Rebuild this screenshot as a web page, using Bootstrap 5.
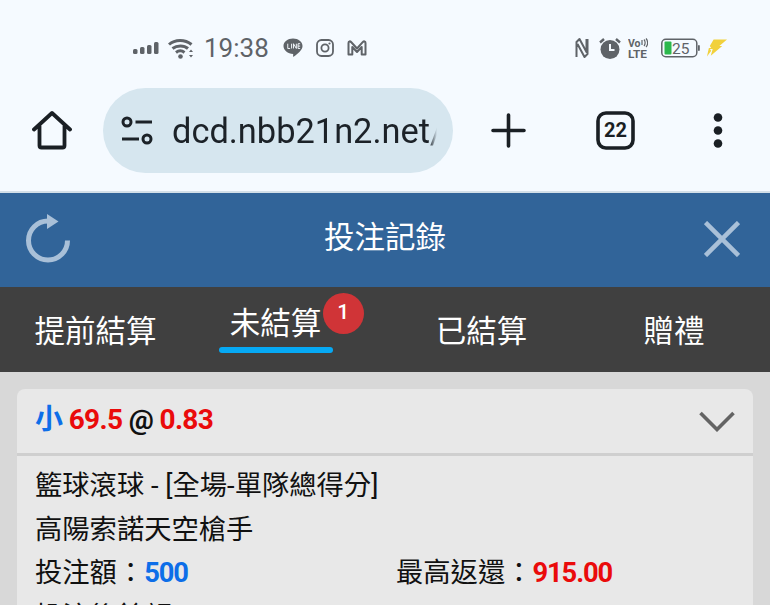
<!DOCTYPE html>
<html lang="zh-Hant">
<head>
<meta charset="utf-8">
<link href="https://cdn.jsdelivr.net/npm/bootstrap@5.3.0/dist/css/bootstrap.min.css" rel="stylesheet">
<style>
html,body{margin:0;height:605px;overflow:hidden}
body{background:#f5faff;font-family:Roboto,"Noto Sans CJK TC",sans-serif;color:#111}
.statusbar{height:87px;padding:9px 43px 0 133px;color:#5f6368}
.sb-wifi{margin-left:9px}
.sb-time{font-size:26px;line-height:34px;width:66px;margin-left:9px;flex:none}
.sb-line{margin-left:13px}
.sb-ig{margin-left:13px}
.sb-m{margin-left:13px}
.sb-alarm{margin-left:10px}
.sb-volte{margin-left:7px}
.sb-batt{margin-left:13px}
.sb-bolt{margin-left:6px}
.chrome{height:104px;padding-bottom:18px}
.chrome-home{width:103px}
.urlpill{width:350px;height:85px;background:#d6e6ef;border-radius:43px;padding-left:18px;overflow:hidden;margin-top:1px}
.urltext{font-size:34.4px;line-height:40px;margin-left:18px;color:#1c2228;width:265px;overflow:hidden;white-space:nowrap;-webkit-mask-image:linear-gradient(90deg,#000 97%,transparent)}
.chrome-rest{flex:1}
.ico-plus{margin-left:38px}
.ico-tabs{margin-left:70px}
.ico-dots{margin-left:78px}
.sep{height:2px;background:#d3dfe8}
.titlebar{height:94px;background:#316499;color:#fff;padding:0 30px 2px}
.side-slot{flex:1 1 0}
.ico-refresh{margin-left:-4px}
.title-txt{font-size:30.5px;line-height:40px;font-weight:400;margin-top:-2px}
.tabs{height:85px;background:#404040;color:#fff;font-size:30.5px}
.tab-a{position:relative;line-height:40px;text-align:center;padding-top:4px}
.tab1{width:191px}.tab2{width:194px}.tab3{width:193px}.tab4{width:192px}
.tab-inner{position:relative;display:inline-block;top:-8px;margin-right:25px}
.under{position:absolute;left:-11px;right:-12px;top:43px;height:6px;background:#06a9f4;border-radius:3px}
.dotbadge{position:absolute;left:93px;top:-11px;width:41px;height:41px;border-radius:50%;background:#d03437;font-size:21px;font-weight:500;line-height:38px;text-align:center;color:#fff;font-family:Roboto,sans-serif;padding:0}
.pagebody{background:#d8d8d8;height:233px;padding:17px 17px 0}
.bet-card{background:#e8e8e8;border:0;border-radius:8px 8px 0 0;height:216px;overflow:hidden;color:#111}
.bet-head{height:67px;flex:none;border-bottom:3px solid #cfcfcf;padding:0 18px;background:transparent}
.bet-title{font-size:28px;line-height:36px;font-weight:700;letter-spacing:-.65px;margin-top:-3px}
.c-blue{color:#0d6ee8}.c-red{color:#ea0b0b}
.bet-body{padding:9px 18px 0;font-size:27.3px;line-height:43.6px;white-space:nowrap}
.bet-body b{font-weight:700;letter-spacing:-1.1px}
.half{width:361px}
.tiny-ico{display:block;flex:none}
</style>
</head>
<body>
<div class="statusbar d-flex align-items-center">
  <svg class="tiny-ico" width="26" height="12" viewBox="0 0 26 12"><rect x="0" y="7" width="4.500" height="5" rx="1.500" fill="#5f6368"/><rect x="7" y="5" width="4.500" height="7" rx="1.500" fill="#5f6368"/><rect x="14" y="3" width="4.500" height="9" rx="1.500" fill="#5f6368"/><rect x="21" y="0" width="4.500" height="12" rx="1.500" fill="#5f6368"/></svg>
  <svg class="tiny-ico sb-wifi" width="27" height="21" viewBox="0 0 27 21"><path d="M1 6.500C7 1 17 1 23.500 6.500M4.500 10.500C9 7 16 7 20 10.500M8 14.500C10.500 12.500 14 12.500 16.500 14.500" fill="none" stroke="#5f6368" stroke-width="3"/><circle cx="12.500" cy="18.500" r="2.300" fill="#5f6368"/><path d="M23 11.500l2 2.500h-4zM23 19.500l2-2.500h-4z" fill="#5f6368"/></svg>
  <div class="sb-time">19:38</div>
  <svg class="tiny-ico sb-line" width="20" height="20" viewBox="0 0 21 20"><path d="M10.500 0C16 0 20.500 3.500 20.500 8c0 4-5 8.500-9 11-.8.500-1-.1-.9-.8l.1-2C5 16.200.5 12.500.5 8 .5 3.500 5 0 10.500 0z" fill="#5f6368"/><path d="M5 5.500v5h2.500M9 5.500v5M11 10.500v-5l3 5v-5M18 5.500h-2.200v5H18M15.800 8H18" fill="none" stroke="#f5faff" stroke-width="1"/></svg>
  <svg class="tiny-ico sb-ig" width="18" height="18" viewBox="0 0 18 18"><rect x="1" y="1" width="16" height="16" rx="4.500" fill="none" stroke="#5f6368" stroke-width="1.800"/><circle cx="9" cy="9" r="3.600" fill="none" stroke="#5f6368" stroke-width="1.800"/><circle cx="13.500" cy="4.500" r="1.100" fill="#5f6368"/></svg>
  <svg class="tiny-ico sb-m" width="20" height="16" viewBox="0 0 20 16"><path d="M1.500 14.500V3c0-2 1.700-2 2.800-.8L10 8.500l5.700-6.300c1.100-1.200 2.800-1.200 2.800.8v11.500h-3.800V7L10 12 5.300 7v7.500z" fill="none" stroke="#5f6368" stroke-width="2" stroke-linejoin="round"/></svg>
  <div class="flex-grow-1"></div>
  <svg class="tiny-ico" width="14" height="22" viewBox="0 0 14 22"><path d="M1.500 20V5l3-3 7 13V2M12.500 2v15l-3 3-7-13" fill="none" stroke="#5f6368" stroke-width="2" stroke-linejoin="round"/></svg>
  <svg class="tiny-ico sb-alarm" width="22" height="21" viewBox="0 0 22 21"><circle cx="11" cy="11.500" r="9.500" fill="#5f6368"/><path d="M11 6v6h4.500" fill="none" stroke="#f5faff" stroke-width="2"/><path d="M1 4.500L5 1M21 4.500L17 1" stroke="#5f6368" stroke-width="2.400" fill="none"/></svg>
  <svg class="tiny-ico sb-volte" width="20" height="21" viewBox="0 0 20 21"><text x="0" y="9" font-size="10.500" font-weight="700" font-family="Roboto,sans-serif" fill="#5f6368">Vo</text><path d="M14 7V2M16 1.500c1.500 1.800 1.500 5 0 6.500M18 .5c2.200 2.500 2.200 6.500 0 8.500" stroke="#5f6368" fill="none" stroke-width="1.200"/><text x="0" y="20" font-size="11" font-weight="700" font-family="Roboto,sans-serif" fill="#5f6368" textLength="19" lengthAdjust="spacingAndGlyphs">LTE</text></svg>
  <svg class="tiny-ico sb-batt" width="39" height="20" viewBox="0 0 39 20"><rect x=".8" y="1.300" width="35" height="17.400" rx="4" fill="none" stroke="#5f6368" stroke-width="1.500"/><rect x="3.500" y="3.500" width="7" height="13" rx="1" fill="#2cb84c"/><rect x="37" y="7" width="1.800" height="6" rx=".9" fill="#5f6368"/><text x="11" y="15.500" font-size="15.500" font-family="Roboto,sans-serif" fill="#5f6368">25</text></svg>
  <svg class="tiny-ico sb-bolt" width="21" height="18" viewBox="0 0 22 18"><path d="M8 0h14L14 7h3L5 17l2-7H4l1.500 2L1 18l2-9h2.500L4 7z" fill="#f1d13d"/></svg>
</div>
<div class="chrome d-flex align-items-center">
  <div class="chrome-home d-flex justify-content-center">
    <svg width="40" height="39" viewBox="0 0 40 39"><path d="M2 18.500L20 2l18 16.500M7.500 15v19.500q0 2 2 2h21q2 0 2-2V15" fill="none" stroke="#1a1f24" stroke-width="3.800" stroke-linejoin="round" stroke-linecap="round"/></svg>
  </div>
  <div class="urlpill d-flex align-items-center">
    <svg class="tiny-ico" width="33" height="29" viewBox="0 0 33 29"><circle cx="6" cy="6" r="4" fill="none" stroke="#1c2228" stroke-width="3"/><path d="M14.500 6H31M1 23h17" stroke="#1c2228" stroke-width="3.200" fill="none"/><circle cx="26" cy="23" r="4" fill="none" stroke="#1c2228" stroke-width="3"/></svg>
    <div class="urltext">dcd.nbb21n2.net/</div>
  </div>
  <div class="chrome-rest d-flex align-items-center">
    <svg class="ico-plus" width="35" height="35" viewBox="0 0 35 35"><path d="M17.500 2v31M2 17.500h31" stroke="#1a1f24" stroke-width="3.600" stroke-linecap="round"/></svg>
    <svg class="ico-tabs" width="39" height="39" viewBox="0 0 39 39"><rect x="2" y="2" width="35" height="35" rx="8" fill="none" stroke="#1a1f24" stroke-width="3.600"/><text x="19.500" y="26" text-anchor="middle" font-size="20" font-weight="700" font-family="Roboto,sans-serif" fill="#1a1f24">22</text></svg>
    <svg class="ico-dots" width="10" height="35" viewBox="0 0 10 35"><circle cx="5" cy="4.500" r="4.300" fill="#1a1f24"/><circle cx="5" cy="17.500" r="4.300" fill="#1a1f24"/><circle cx="5" cy="30.500" r="4.300" fill="#1a1f24"/></svg>
  </div>
</div>
<div class="sep"></div>
<div class="titlebar d-flex align-items-center">
  <div class="side-slot"><svg class="tiny-ico ico-refresh" width="46" height="50" viewBox="0 0 46 50"><path d="M22 7A19.500 19.500 0 1 0 41.500 26.500" fill="none" stroke="#a9c0d8" stroke-width="5"/><path d="M21 0l11.500 7.500L21 15z" fill="#a9c0d8"/></svg></div>
  <div class="title-txt">投注記錄</div>
  <div class="side-slot d-flex justify-content-end"><svg class="tiny-ico" width="36" height="36" viewBox="0 0 36 36"><path d="M1.500 1.500l33 33M34.500 1.500l-33 33" stroke="#a9c0d8" stroke-width="4.500"/></svg></div>
</div>
<div class="tabs d-flex align-items-center">
  <div class="tab-a tab1">提前結算</div>
  <div class="tab-a tab2"><span class="tab-inner">未結算<span class="under"></span><span class="dotbadge badge rounded-circle">1</span></span></div>
  <div class="tab-a tab3">已結算</div>
  <div class="tab-a tab4">贈禮</div>
</div>
<div class="pagebody">
  <div class="card bet-card">
    <div class="card-header bet-head d-flex align-items-center justify-content-between">
      <div class="bet-title"><span class="c-blue">小</span> <span class="c-red">69.5</span> @ <span class="c-red">0.83</span></div>
      <svg class="tiny-ico" width="36" height="21" viewBox="0 0 36 21"><path d="M1.500 2L18 18.500 34.500 2" fill="none" stroke="#636363" stroke-width="3.600"/></svg>
    </div>
    <div class="card-body bet-body">
      <div>籃球滾球 - [全場-單隊總得分]</div>
      <div>高陽索諾天空槍手</div>
      <div class="d-flex"><div class="half">投注額：<b class="c-blue">500</b></div><div>最高返還：<b class="c-red">915.00</b></div></div>
      <div>投注後餘額：<b class="c-blue">31490.66</b></div>
    </div>
  </div>
</div>
<script src="https://cdn.jsdelivr.net/npm/bootstrap@5.3.0/dist/js/bootstrap.bundle.min.js"></script>
</body>
</html>
